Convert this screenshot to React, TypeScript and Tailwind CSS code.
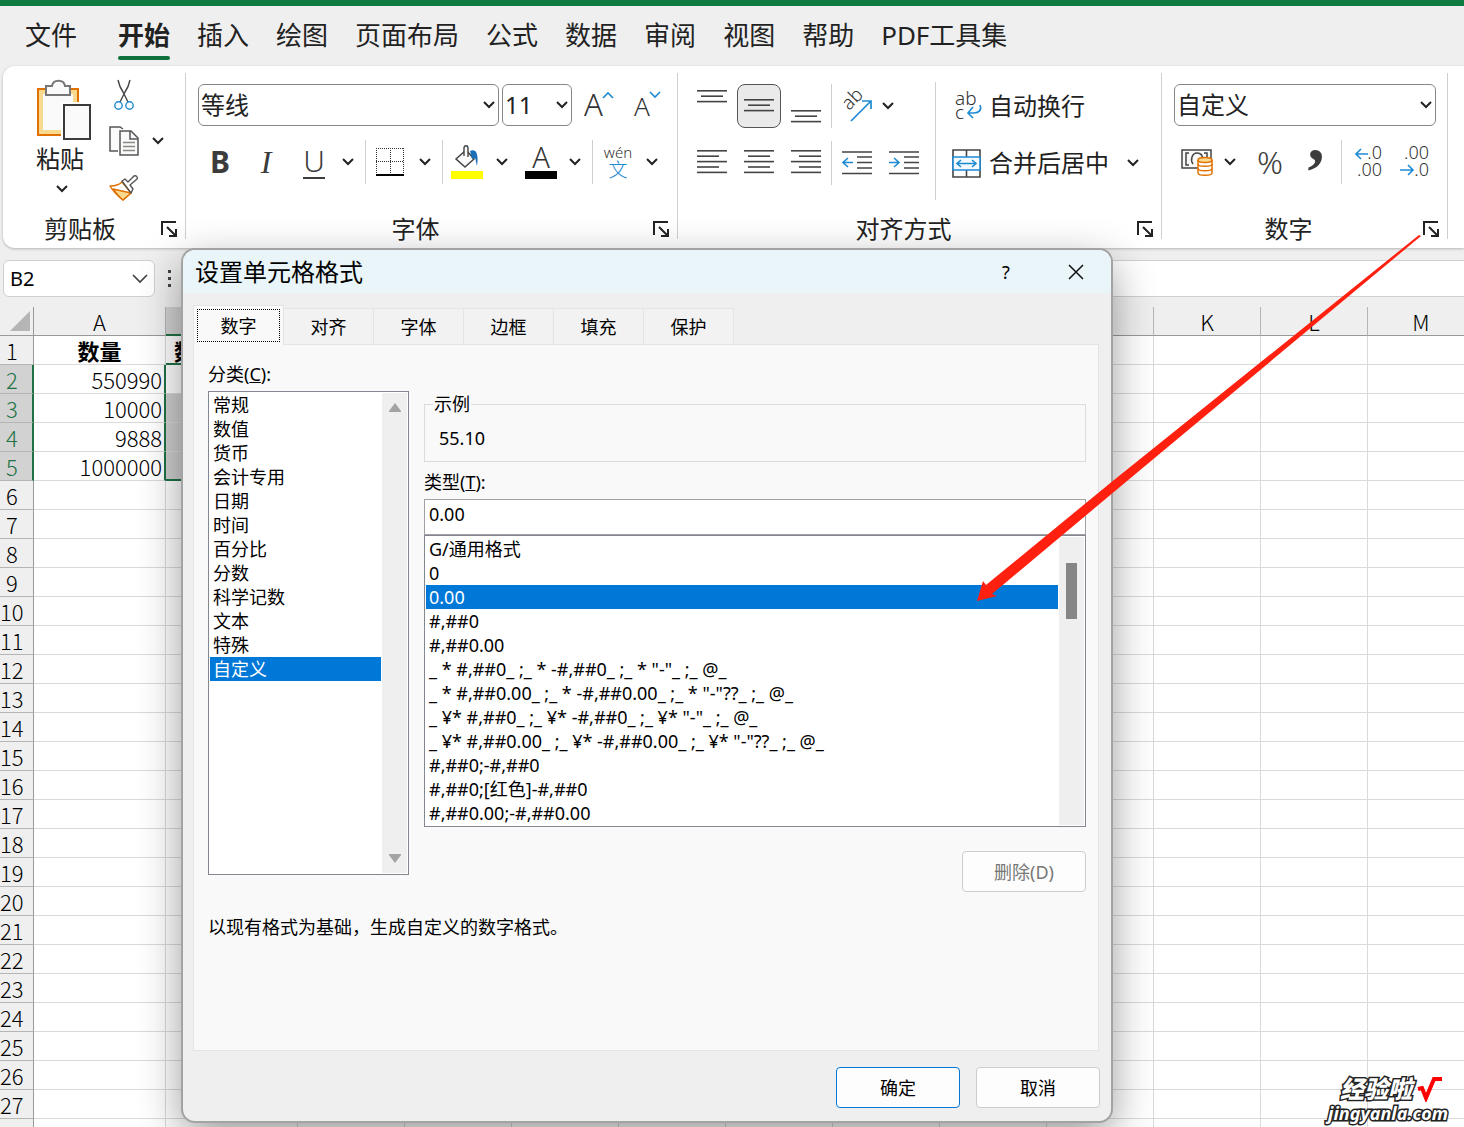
import React, { useState } from 'react';
import clsx from 'clsx';

const MENU = ['插入', '绘图', '页面布局', '公式', '数据', '审阅', '视图', '帮助', 'PDF工具集'];

const DIALOG_TABS = ['数字', '对齐', '字体', '边框', '填充', '保护'];

const CATEGORIES = [
  '常规', '数值', '货币', '会计专用', '日期', '时间',
  '百分比', '分数', '科学记数', '文本', '特殊', '自定义',
];

const FORMATS = [
  'G/通用格式',
  '0',
  '0.00',
  '#,##0',
  '#,##0.00',
  '_ * #,##0_ ;_ * -#,##0_ ;_ * "-"_ ;_ @_ ',
  '_ * #,##0.00_ ;_ * -#,##0.00_ ;_ * "-"??_ ;_ @_ ',
  '_ ¥* #,##0_ ;_ ¥* -#,##0_ ;_ ¥* "-"_ ;_ @_ ',
  '_ ¥* #,##0.00_ ;_ ¥* -#,##0.00_ ;_ ¥* "-"??_ ;_ @_ ',
  '#,##0;-#,##0',
  '#,##0;[红色]-#,##0',
  '#,##0.00;-#,##0.00',
];

const COLUMNS = ['A', 'B', 'C', 'D', 'E', 'F', 'G', 'H', 'I', 'J', 'K', 'L', 'M', 'N'];
const ROWS = Array.from({ length: 28 }, (_, i) => i + 1);
const VALUES: Record<number, string> = { 2: '550990', 3: '10000', 4: '9888', 5: '1000000' };

/* ---------- icons ---------- */

const Chevron = () => (
  <svg width="12" height="8" viewBox="0 0 12 8" fill="none" stroke="#222" strokeWidth="2">
    <path d="M1 1l5 5 5-5" />
  </svg>
);

const PasteIcon = () => (
  <svg width="56" height="62" viewBox="0 0 56 62" strokeWidth="2">
    <path d="M2 10h40v46H2z" fill="#f8d98d" stroke="#e07000" />
    <path d="M7 15h30v36H7z" fill="#fafafa" />
    <path d="M10 7h6c1-7 12-7 13 0h5v9H10z" fill="#fafafa" stroke="#777" />
    <path d="M25 23h31v39H25z" fill="#fff" />
    <path d="M28 26h26v34H28z" fill="#fafafa" stroke="#3b3b3b" />
  </svg>
);

const CutIcon = () => (
  <svg width="22" height="32" viewBox="0 0 22 32" fill="none" strokeWidth="1.4">
    <path d="M5 1c1 5 3 9 5 12l5 10M17 1c-1 5-3 9-5 12L7 23" stroke="#444" />
    <circle cx="5.5" cy="26.500" r="3.7" stroke="#1e8ad2" />
    <circle cx="16.5" cy="26.500" r="3.7" stroke="#1e8ad2" />
  </svg>
);

const CopyIcon = () => (
  <svg width="30" height="30" viewBox="0 0 30 30" fill="#fafafa" stroke="#555" strokeWidth="1.5">
    <path d="M9 25H1V1h10l3 2" />
    <path d="M11 5h11l7 7v17H11z" />
    <path d="M21 5v8h8" fill="none" />
    <path d="M14 16.5h12M14 20.5h12M14 24.5h12" stroke="#8a8a84" />
  </svg>
);

const BrushIcon = () => (
  <svg width="30" height="26" viewBox="0 0 30 26" strokeWidth="1.4" strokeLinejoin="round">
    <path d="M1 11c5 0 9-1 12-4l9 11-8 7C10 22 4 16 1 11z" fill="#fff" stroke="#e07000" />
    <path d="M4 14l18 4-8 7c-3-2-7-7-10-11z" fill="#f8d98d" stroke="#e07000" />
    <path d="M13 6l3-2 3 3 6-6c2-1 4 1 3 3l-7 6 3 4-2 4z" fill="#fff" stroke="#555" />
  </svg>
);

const LauncherIcon = () => (
  <svg width="17" height="17" viewBox="0 0 17 17" fill="none" stroke="#222" strokeWidth="2">
    <path d="M1 14V1h14" />
    <path d="M6 6l9 9M15 8v7H8" />
  </svg>
);

const GrowFontIcon = () => (
  <svg width="30" height="32" viewBox="0 0 30 32" className="overflow-visible font-light">
    <text x="0" y="27" fontSize="31" fill="#333">A</text>
    <path d="M19 9l5-5 5 5" fill="none" stroke="#1e8ad2" strokeWidth="1.6" />
  </svg>
);

const ShrinkFontIcon = () => (
  <svg width="28" height="32" viewBox="0 0 28 32" className="overflow-visible font-light">
    <text x="0" y="27" fontSize="26" fill="#333">A</text>
    <path d="M16 3l5 5 5-5" fill="none" stroke="#1e8ad2" strokeWidth="1.6" />
  </svg>
);

const BordersIcon = () => (
  <svg width="28" height="30" viewBox="0 0 28 30" fill="none" stroke="#333">
    <path d="M.5 1v26M14.5 1v26M27.5 1v26M0 1.5h28M0 14.5h28" strokeDasharray="1 1" />
    <path d="M0 28h28" stroke="#000" strokeWidth="2" />
  </svg>
);

const FillIcon = () => (
  <svg width="32" height="34" viewBox="0 0 32 34">
    <path d="M5 14l10-9 8 9-9 8z" fill="#fafafa" stroke="#444" strokeWidth="1.5" />
    <path d="M13 11V3c0-3 4-3 4 0v9" fill="#fafafa" stroke="#444" strokeWidth="1.4" />
    <path d="M19 6c6-3 9 3 7 15-1-3-1-6-2-8l-3 1z" fill="#1b6fb8" />
    <path d="M0 26h32v8H0z" fill="#ff0" />
  </svg>
);

const FontColorIcon = () => (
  <svg width="32" height="34" viewBox="0 0 32 34" className="overflow-visible font-light">
    <text x="16" y="23" fontSize="29" textAnchor="middle" fill="#333">A</text>
    <path d="M0 26h32v8H0z" fill="#000" />
  </svg>
);

const PhoneticIcon = () => (
  <svg width="30" height="34" viewBox="0 0 30 34" textAnchor="middle" className="overflow-visible font-light">
    <text x="15" y="13" fontSize="15" fill="#333">wén</text>
    <text x="15" y="32" fontSize="19" fill="#1e8ad2">文</text>
  </svg>
);

// each entry is [x, width] of one text line
const LinesIcon = ({ lines, top = 0 }: { lines: [number, number][]; top?: number }) => (
  <svg width="30" height="40" viewBox="0 0 30 40">
    {lines.map(([x, w], i) => (
      <rect key={i} x={x} y={top + i * 5.4} width={w} height="1.6" fill="#444" />
    ))}
  </svg>
);

const IndentIcon = ({ out }: { out?: boolean }) => (
  <svg width="30" height="40" viewBox="0 0 30 40">
    <path d="M0 9h30M15 14h15M15 19.500h15M15 25h15M0 30.500h30" stroke="#444" strokeWidth="1.6" />
    <path
      d={out ? 'M11 19.500H1M6 15L1 19.500l5 4.500' : 'M0 19.500h10M5 15l5 4.500-5 4.500'}
      fill="none"
      stroke="#1e8ad2"
      strokeWidth="1.6"
    />
  </svg>
);

const OrientationIcon = () => (
  <svg width="32" height="34" viewBox="0 0 32 34" className="overflow-visible font-light">
    <text x="8" y="22" fontSize="19" fill="#333" transform="rotate(-45 8 22)">ab</text>
    <path d="M10 32l20-20M21 12h9v8" fill="none" stroke="#1e8ad2" strokeWidth="1.7" />
  </svg>
);

const WrapIcon = () => (
  <svg width="29" height="32" viewBox="0 0 29 32" className="overflow-visible font-light">
    <text x="3" y="15" fontSize="19" fill="#333">ab</text>
    <text x="3" y="29" fontSize="19" fill="#333">c</text>
    <path d="M28 15c2 5-1 8-6 8h-6M21 17l-5 6 5 5" fill="none" stroke="#1e8ad2" strokeWidth="1.6" />
  </svg>
);

const MergeIcon = () => (
  <svg width="29" height="29" viewBox="0 0 29 29" fill="none" strokeWidth="1.6">
    <path d="M1 1h27v27H1zM14.500 1v7M14.500 21v7" stroke="#444" />
    <path d="M1 8h27v13H1z" fill="#f3f9fd" stroke="#1e8ad2" />
    <path d="M5 14.500h19M9 11l-4 3.500L9 18M20 11l4 3.500-4 3.500" stroke="#1e8ad2" />
  </svg>
);

const CurrencyIcon = () => (
  <svg width="32" height="28" viewBox="0 0 32 28" fill="none" strokeWidth="1.5">
    <path d="M1 2h29v18H1z" fill="#fafafa" stroke="#444" />
    <path d="M8 5H5v12h3M23 5h3v5M12 16c-3-4-1-11 4-11s6 4 5 6" stroke="#444" />
    <path d="M17 12v13c0 3 14 3 14 0V12" fill="#fff" stroke="#e07000" />
    <ellipse cx="24" cy="12" rx="7" ry="2.500" fill="#f8d98d" stroke="#e07000" />
    <path d="M17 16c0 3 14 3 14 0M17 20.500c0 3 14 3 14 0" stroke="#e07000" />
  </svg>
);

const MoreDecimalsIcon = () => (
  <svg width="28" height="34" viewBox="0 0 28 34" fontSize="18" textAnchor="end" className="overflow-visible font-light">
    <text x="28" y="14" fill="#333">.0</text>
    <text x="28" y="31" fill="#333">.00</text>
    <path d="M14 9H2M7 4L2 9l5 5" fill="none" stroke="#1e8ad2" strokeWidth="1.6" />
  </svg>
);

const FewerDecimalsIcon = () => (
  <svg width="31" height="34" viewBox="0 0 31 34" fontSize="18" textAnchor="end" className="overflow-visible font-light">
    <text x="30" y="14" fill="#333">.00</text>
    <text x="30" y="31" fill="#333">.0</text>
    <path d="M1 25h13M9 20l5 5-5 5" fill="none" stroke="#1e8ad2" strokeWidth="1.6" />
  </svg>
);

/* ---------- ribbon ---------- */

interface ToolProps {
  label: string;
  className?: string;
  children: React.ReactNode;
}

const Tool: React.FC<ToolProps> = ({ label, className, children }) => (
  <button aria-label={label} className={clsx('flex h-11 shrink-0 items-center justify-center', className)}>
    {children}
  </button>
);

const Separator = ({ className }: { className?: string }) => (
  <div className={clsx('h-11 w-px shrink-0 bg-[#cfcfcf]', className)} />
);

interface GroupProps {
  title: string;
  className?: string;
  children: React.ReactNode;
}

const Group: React.FC<GroupProps> = ({ title, className, children }) => (
  <section className={clsx('flex h-[166px] shrink-0 flex-col justify-between border-r border-[#cfcfcf]', className)}>
    {children}
    <div className="flex h-5 items-center">
      <span className="flex-1 text-center leading-5">{title}</span>
      <button aria-label={`${title}设置`} className="flex w-8 justify-center">
        <LauncherIcon />
      </button>
    </div>
  </section>
);

interface ComboProps {
  label: string;
  value: string;
  className?: string;
}

const Combo: React.FC<ComboProps> = ({ label, value, className }) => (
  <div className={clsx('relative h-[42px] shrink-0', className)}>
    <select
      aria-label={label}
      className="h-full w-full appearance-none rounded-md border border-[#868686] bg-white pl-[2px] leading-8"
    >
      <option>{value}</option>
    </select>
    <span className="pointer-events-none absolute inset-y-0 right-1 flex items-center">
      <Chevron />
    </span>
  </div>
);

const Ribbon = () => (
  <div className="ml-[3px] flex h-[182px] overflow-hidden rounded-l-xl bg-white pt-[7px] text-2xl text-[#222] shadow-[0_1px_3px_rgba(0,0,0,0.25)]">
    <Group title="剪贴板" className="w-[183px] pl-1">
      <div className="flex pl-[29px]">
        <button className="flex w-14 flex-col items-start pt-[6px]">
          <PasteIcon />
          <span className="leading-9">粘贴</span>
          <span className="flex h-6 w-[52px] items-center justify-center"><Chevron /></span>
        </button>
        <div className="flex flex-col pl-[10px]">
          <Tool label="剪切" className="w-11"><CutIcon /></Tool>
          <div className="flex">
            <Tool label="复制" className="w-11 pt-1"><CopyIcon /></Tool>
            <Tool label="复制选项" className="w-6 pt-1"><Chevron /></Tool>
          </div>
          <Tool label="格式刷" className="w-11 pt-[10px]"><BrushIcon /></Tool>
        </div>
      </div>
    </Group>

    <Group title="字体" className="w-[492px]">
      <div className="flex flex-col gap-[13px] pt-[10px] pl-3">
        <div className="flex h-11 items-center">
          <Combo label="字体" value="等线" className="w-[301px]" />
          <Combo label="字号" value="11" className="ml-[3px] w-[70px]" />
          <Tool label="增大字号" className="ml-3 w-[30px]"><GrowFontIcon /></Tool>
          <Tool label="减小字号" className="ml-5 w-7"><ShrinkFontIcon /></Tool>
        </div>
        <div className="flex items-center text-[#3c3c3c]">
          <Tool label="加粗" className="w-11 text-3xl font-bold">B</Tool>
          <Tool label="倾斜" className="w-12 font-['Liberation_Serif',serif] text-[32px] italic">I</Tool>
          <Tool label="下划线" className="w-12">
            <span className="border-b-2 text-3xl leading-8 font-light">U</span>
          </Tool>
          <Tool label="下划线选项" className="w-5"><Chevron /></Tool>
          <Separator className="ml-[7px]" />
          <Tool label="边框" className="w-12"><BordersIcon /></Tool>
          <Tool label="边框选项" className="w-[22px]"><Chevron /></Tool>
          <Separator className="ml-[6px]" />
          <Tool label="填充颜色" className="w-12"><FillIcon /></Tool>
          <Tool label="填充颜色选项" className="w-[22px]"><Chevron /></Tool>
          <Tool label="字体颜色" className="w-14"><FontColorIcon /></Tool>
          <Tool label="字体颜色选项" className="w-3"><Chevron /></Tool>
          <Separator className="ml-[11px]" />
          <Tool label="拼音" className="w-[50px]"><PhoneticIcon /></Tool>
          <Tool label="拼音选项" className="w-[18px]"><Chevron /></Tool>
        </div>
      </div>
    </Group>

    <Group title="对齐方式" className="w-[484px]">
      <div className="flex">
        <div className="flex w-[257px] flex-col gap-[13px] pt-[11px] pl-3">
          <div className="flex gap-[3px]">
            <Tool label="顶端对齐" className="w-11"><LinesIcon top={4} lines={[[0, 30], [4, 22], [0, 30]]} /></Tool>
            <Tool label="垂直居中" className="w-11 rounded-lg border border-[#555] bg-[#eaeaea]">
              <LinesIcon top={13} lines={[[0, 30], [4, 22], [0, 30]]} />
            </Tool>
            <Tool label="底端对齐" className="w-11"><LinesIcon top={24} lines={[[0, 30], [4, 22], [0, 30]]} /></Tool>
            <Separator />
            <Tool label="方向" className="w-11"><OrientationIcon /></Tool>
            <Tool label="方向选项" className="w-3"><Chevron /></Tool>
          </div>
          <div className="flex gap-[3px]">
            <Tool label="左对齐" className="w-11"><LinesIcon top={7} lines={[[0, 30], [0, 22], [0, 30], [0, 22], [0, 30]]} /></Tool>
            <Tool label="居中" className="w-11"><LinesIcon top={7} lines={[[0, 30], [4, 22], [0, 30], [4, 22], [0, 30]]} /></Tool>
            <Tool label="右对齐" className="w-11"><LinesIcon top={7} lines={[[0, 30], [8, 22], [0, 30], [8, 22], [0, 30]]} /></Tool>
            <Separator />
            <Tool label="减少缩进量" className="w-11"><IndentIcon out /></Tool>
            <Tool label="增加缩进量" className="w-11"><IndentIcon /></Tool>
          </div>
        </div>
        <div className="mt-[9px] h-[118px] w-px bg-[#cfcfcf]" />
        <div className="flex flex-col gap-[13px] pt-[11px] pl-4">
          <button className="flex h-11 items-center gap-2"><WrapIcon />自动换行</button>
          <div className="flex">
            <button className="flex h-11 items-center gap-2"><MergeIcon />合并后居中</button>
            <Tool label="合并选项" className="ml-[14px] w-5"><Chevron /></Tool>
          </div>
        </div>
      </div>
    </Group>

    <Group title="数字" className="w-[286px]">
      <div className="flex flex-col gap-[13px] pt-[10px] pl-3">
        <div className="flex h-11 items-center">
          <Combo label="数字格式" value="自定义" className="w-[262px]" />
        </div>
        <div className="flex text-[#3c3c3c]">
          <Tool label="会计数字格式" className="w-[46px]"><CurrencyIcon /></Tool>
          <Tool label="会计数字格式选项" className="w-5"><Chevron /></Tool>
          <Tool label="百分比样式" className="w-[60px] text-[32px] leading-8 font-light">%</Tool>
          <Tool label="千位分隔样式" className="w-8">
            <svg width="20" height="30" viewBox="0 0 20 30" className="overflow-visible">
              <text x="10" y="13" fontSize="68" fontWeight="bold" textAnchor="middle" fill="#3c3c3c" className="font-['Liberation_Serif',serif]">,</text>
            </svg>
          </Tool>
          <Separator className="ml-[9px]" />
          <Tool label="增加小数位数" className="w-[52px]"><MoreDecimalsIcon /></Tool>
          <Tool label="减少小数位数" className="w-10"><FewerDecimalsIcon /></Tool>
        </div>
      </div>
    </Group>
  </div>
);

/* ---------- worksheet ---------- */

const Sheet = () => (
  <table className="w-[1582px] table-fixed border-separate border-spacing-0 font-['Noto_Sans_CJK_SC',sans-serif] text-[22px] leading-[26px] font-light text-black">
    <colgroup>
      <col className="w-[34px]" />
      <col className="w-[132px]" />
      <col className="w-[132px]" />
      {COLUMNS.slice(2).map(c => <col key={c} className="w-[107px]" />)}
    </colgroup>
    <thead>
      <tr className="h-[29px]">
        <th className="border-r border-b border-[#999] bg-[#efefef] p-0">
          <svg width="20" height="20" viewBox="0 0 20 20" className="ml-auto mr-[3px]">
            <path d="M20 0v20H0z" fill="#b5b5b5" />
          </svg>
        </th>
        {COLUMNS.map(c => (
          <th
            key={c}
            scope="col"
            className={clsx(
              'border-r border-r-[#b5b5b5] p-0 font-light',
              c === 'B' ? 'border-b-2 border-b-[#1e7145] bg-[#d2d2d2]' : 'border-b border-b-[#999] bg-[#efefef]',
            )}
          >
            {c}
          </th>
        ))}
      </tr>
    </thead>
    <tbody>
      {ROWS.map(row => {
        const selected = row >= 2 && row <= 5;
        return (
          <tr key={row} className="h-[29px]">
            <th
              scope="row"
              className={clsx(
                'border-b border-b-[#b5b5b5] p-0 text-left font-light',
                selected
                  ? 'border-r-2 border-r-[#1e7145] bg-[#d2d2d2] text-[#1e7145]'
                  : 'border-r border-r-[#999] bg-[#efefef]',
                row < 10 && 'pl-[6px]',
              )}
            >
              {row}
            </th>
            {COLUMNS.map(c => (
              <td
                key={c}
                className={clsx(
                  'overflow-hidden p-0 whitespace-nowrap',
                  c === 'A' && selected ? 'border-r-2 border-r-[#1e7145] pr-[2px] text-right' : 'border-r border-r-[#dadada]',
                  c === 'B' && (row === 1 || row === 5) ? 'border-b-2 border-b-[#1e7145]' : 'border-b border-b-[#dadada]',
                  c === 'B' && selected && row > 2 ? 'bg-[#cfcfcf]' : 'bg-white',
                  row === 1 && 'font-bold',
                  row === 1 && c === 'A' && 'text-center',
                  row === 1 && c === 'B' && 'pl-2',
                )}
              >
                {c === 'A' && (row === 1 ? '数量' : VALUES[row])}
                {c === 'B' && row === 1 && '数'}
              </td>
            ))}
          </tr>
        );
      })}
    </tbody>
  </table>
);

/* ---------- dialog ---------- */

interface ListProps {
  label: string;
  items: string[];
  value: string;
  onChange: (item: string) => void;
}

const OptionList: React.FC<ListProps> = ({ label, items, value, onChange }) => (
  <ul role="listbox" aria-label={label} className="min-w-0 flex-1 leading-6">
    {items.map(item => (
      <li
        key={item}
        role="option"
        aria-selected={item === value}
        onClick={() => onChange(item)}
        className={clsx('h-6 pl-[3px] whitespace-pre', item === value && 'bg-[#0078d7] text-white')}
      >
        {item}
      </li>
    ))}
  </ul>
);

const FormatDialog = () => {
  const [tab, setTab] = useState('数字');
  const [category, setCategory] = useState('自定义');
  const [format, setFormat] = useState('0.00');

  return (
    <div
      role="dialog"
      aria-label="设置单元格格式"
      className="absolute top-[250px] left-[183px] w-[928px] rounded-xl bg-[#efefef] pb-[13px] text-lg leading-6 text-black shadow-[0_0_0_2px_#a3a3a3,0_14px_44px_rgba(0,0,0,0.42)]"
    >
      <header className="flex h-[43px] items-center rounded-t-xl bg-[#e9f5f8] pl-3">
        <h1 className="flex-1 text-2xl leading-10">设置单元格格式</h1>
        <button aria-label="帮助" className="w-[70px] text-lg">?</button>
        <button aria-label="关闭" className="flex w-[70px] justify-center">
          <svg width="16" height="16" viewBox="0 0 16 16" stroke="#111" strokeWidth="1.5">
            <path d="M1 1l14 14M15 1L1 15" />
          </svg>
        </button>
      </header>

      <div className="pt-3 pr-3 pl-[10px]">
        <div role="tablist" className="flex items-end">
          {DIALOG_TABS.map(name => (
            <button
              key={name}
              role="tab"
              aria-selected={name === tab}
              onClick={() => setTab(name)}
              className={clsx(
                'relative border border-b-0 border-[#e4e4e4]',
                name === tab
                  ? '-mb-px h-10 w-[91px] bg-[#f9f9f9] p-[3px]'
                  : 'h-9 w-[90px] border-l-0 bg-[#f2f2f2]',
              )}
            >
              <span className={clsx('flex h-full items-center justify-center', name === tab && 'border border-dotted border-black')}>
                {name}
              </span>
            </button>
          ))}
        </div>

        <div className="border border-[#e4e4e4] bg-[#f9f9f9] pr-3 pb-[111px] pl-[14px]">
          <div className="flex gap-[15px] pt-[17px]">
            <div className="w-[201px]">
              <div>分类(<u>C</u>):</div>
              <div className="mt-[5px] flex h-[484px] border border-[#828790] bg-white p-px">
                <OptionList label="分类" items={CATEGORIES} value={category} onChange={setCategory} />
                <div className="flex w-[26px] flex-col items-center justify-between border-l border-white bg-[#efefef] py-[10px]">
                  <svg width="12" height="9" viewBox="0 0 12 9" fill="#a3a3a3"><path d="M6 0l6 8v1H0V8z" /></svg>
                  <svg width="12" height="9" viewBox="0 0 12 9" fill="#a3a3a3"><path d="M6 9l6-8V0H0v1z" /></svg>
                </div>
              </div>
            </div>

            <div className="flex flex-1 flex-col pt-[30px]">
              <fieldset className="h-[70px] border border-[#dcdcdc] pl-[14px]">
                <legend className="-ml-[6px] px-px">示例</legend>
                <div className="pt-[10px]">55.10</div>
              </fieldset>
              <label htmlFor="type" className="mt-2">类型(<u>T</u>):</label>
              <input
                id="type"
                value={format}
                onChange={e => setFormat(e.target.value)}
                className="mt-[5px] h-9 border border-[#a0a0a5] bg-white px-1 pb-[6px] outline-none"
              />
              <div className="flex h-[292px] border border-[#828790] bg-white p-px">
                <OptionList label="类型" items={FORMATS} value={format} onChange={setFormat} />
                <div className="flex w-[26px] justify-center border-l border-white bg-[#efefef] pt-[26px]">
                  <div className="h-14 w-[11px] bg-[#858585]" />
                </div>
              </div>
              <button disabled className="mt-6 h-[41px] w-[124px] self-end rounded-[4px] border border-[#cdcdcd] bg-[#fdfdfd] text-[#777]">
                删除(D)
              </button>
            </div>
          </div>
          <p className="mt-[23px]">以现有格式为基础，生成自定义的数字格式。</p>
        </div>
      </div>

      <footer className="mt-4 flex justify-end gap-4 pr-[11px]">
        <button className="h-[41px] w-[124px] rounded-[4px] border border-[#0078d7] bg-[#fdfdfd]">确定</button>
        <button className="h-[41px] w-[124px] rounded-[4px] border border-[#cdcdcd] bg-[#fdfdfd]">取消</button>
      </footer>
    </div>
  );
};

export default function App() {
  return (
    <div className="relative h-screen overflow-hidden bg-[#efefef] font-['Noto_Sans','Noto_Sans_CJK_SC',sans-serif]">
      <div className="h-[6px] bg-[#107c41]" />
      <nav className="flex h-[60px] gap-[27px] pt-[10px] pl-[25px] text-[26px] leading-[38px] whitespace-nowrap text-[#222]">
        <button className="mr-[14px] self-start">文件</button>
        <button className="self-start font-bold">
          <span className="block">开始</span>
          <span className="mt-[2px] block h-1 rounded-sm bg-[#0f703b]" />
        </button>
        {MENU.map(item => <button key={item} className="self-start">{item}</button>)}
      </nav>

      <Ribbon />

      <div className="flex h-[59px] gap-[13px] pt-3 pl-[3px]">
        <div className="flex h-[37px] w-[152px] shrink-0 items-center rounded-md border border-[#cfcfcf] bg-white pr-[6px]">
          <input aria-label="名称框" defaultValue="B2" className="w-full min-w-0 flex-1 pl-[6px] text-xl outline-none" />
          <svg width="16" height="10" viewBox="0 0 16 10" fill="none" stroke="#444" strokeWidth="1.700">
            <path d="M1 1l7 7 7-7" />
          </svg>
        </div>
        <div className="flex h-[37px] shrink-0 flex-col justify-center gap-1">
          <span className="h-[3px] w-[3px] bg-[#444]" />
          <span className="h-[3px] w-[3px] bg-[#444]" />
          <span className="h-[3px] w-[3px] bg-[#444]" />
        </div>
        <input aria-label="编辑栏" className="h-[37px] flex-1 border-y border-[#cfcfcf] bg-white outline-none" />
      </div>

      <Sheet />

      <FormatDialog />

      {/* pointer from the number group launcher to the selected format */}
      <svg width="444" height="366" viewBox="0 0 444 366" className="pointer-events-none absolute top-[235px] left-[977px]">
        <path d="M442 0l2 1-294 245-135 113 5 2-20 5 6-20 3 4 128-105z" fill="#ff2010" />
      </svg>

      <div className="absolute right-4 bottom-1 text-right font-bold text-white italic [paint-order:stroke] [-webkit-text-stroke:3px_#222]">
        <div className="flex items-center justify-end gap-1 pr-[6px] text-2xl leading-7 font-black">
          经验啦
          <svg width="26" height="26" viewBox="0 0 26 26" fill="none" stroke="#f00" strokeWidth="4">
            <path d="M2 13l4-1 4 10L18 3h8" />
          </svg>
        </div>
        <div className="text-lg leading-5">jingyanla.com</div>
      </div>
    </div>
  );
}
